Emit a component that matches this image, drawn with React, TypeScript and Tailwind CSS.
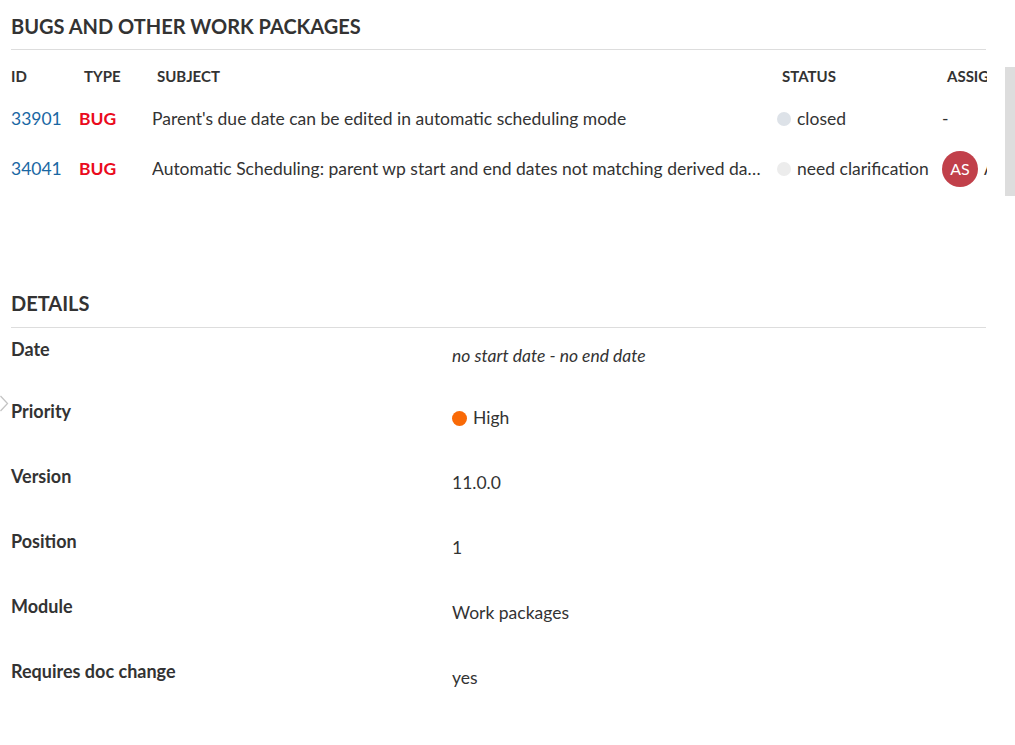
import React from 'react';

type WorkPackage = {
  id: string;
  type: string;
  subject: string;
  status: string;
  statusColor: string;
  assignee?: { initials: string; name: string };
};

const packages: WorkPackage[] = [
  {
    id: '33901',
    type: 'BUG',
    subject: "Parent's due date can be edited in automatic scheduling mode",
    status: 'closed',
    statusColor: 'bg-[#dde2e8]',
  },
  {
    id: '34041',
    type: 'BUG',
    subject:
      'Automatic Scheduling: parent wp start and end dates not matching derived dates of children',
    status: 'need clarification',
    statusColor: 'bg-[#ececec]',
    assignee: { initials: 'AS', name: 'Aleksandra Sokolova' },
  },
];

const details = [
  { label: 'Date', value: 'no start date - no end date', italic: true },
  { label: 'Priority', value: 'High', dot: true },
  { label: 'Version', value: '11.0.0' },
  { label: 'Position', value: '1' },
  { label: 'Module', value: 'Work packages' },
  { label: 'Requires doc change', value: 'yes' },
];

export default function App() {
  return (
    <div className="relative min-h-screen bg-white text-[#333] font-['Lato','Noto_Sans',sans-serif]">
      {/* scrollbar thumb */}
      <div className="absolute right-0 top-[67px] w-[10px] h-[129px] bg-[#dddddd]" />
      {/* collapsed panel toggle */}
      <svg
        className="absolute left-0 top-[395px]"
        width="9"
        height="17"
        viewBox="0 0 9 17"
        fill="none"
      >
        <path d="M0.5 1 L7.5 8.5 L0.5 16" stroke="#c4c4c4" strokeWidth="1.3" />
      </svg>

      <div className="pl-[11px] w-[987px]">
        <h2 className="pt-[14px] pb-[11px] text-[20px] leading-[24px] font-bold uppercase border-b border-[#dddddd] mr-[1px]">
          Bugs and other work packages
        </h2>

        <div className="overflow-hidden">
          <div className="flex h-[44px] items-end pb-[8px] text-[15px] leading-[20px] font-bold uppercase whitespace-nowrap">
            <div className="w-[68px] shrink-0">ID</div>
            <div className="w-[73px] shrink-0 pl-[5px]">Type</div>
            <div className="w-[625px] shrink-0 pl-[5px]">Subject</div>
            <div className="w-[165px] shrink-0 pl-[5px]">Status</div>
            <div className="shrink-0 pl-[5px]">Assignee</div>
          </div>
          {packages.map((wp) => (
            <div
              key={wp.id}
              className="flex h-[50px] items-center text-[17.5px] leading-[24px] whitespace-nowrap"
            >
              <div className="w-[68px] shrink-0 text-[#1a67a3]">{wp.id}</div>
              <div className="w-[73px] shrink-0 font-bold text-[#ea0b1c]">{wp.type}</div>
              <div className="w-[611px] mr-[14px] shrink-0 truncate">{wp.subject}</div>
              <div className="w-[165px] shrink-0 flex items-center gap-[6px]">
                <span className={`w-[14px] h-[14px] rounded-full ${wp.statusColor}`} />
                <span>{wp.status}</span>
              </div>
              <div className="shrink-0 flex items-center gap-[6px]">
                {wp.assignee ? (
                  <>
                    <span className="w-[36px] h-[36px] rounded-full bg-[#c1404a] text-white text-[16px] flex items-center justify-center">
                      {wp.assignee.initials}
                    </span>
                    <span>{wp.assignee.name}</span>
                  </>
                ) : (
                  <span>-</span>
                )}
              </div>
            </div>
          ))}
        </div>

        <h2 className="mt-[97px] pb-[12px] text-[20px] leading-[24px] font-bold uppercase border-b border-[#dddddd] mr-[1px]">
          Details
        </h2>

        <div>
          {details.map((d, i) => (
            <div
              key={d.label}
              className={`flex items-start leading-[24px] ${i === 0 ? 'h-[62px]' : 'h-[65px]'}`}
            >
              <div className="w-[441px] shrink-0 pt-[9px] text-[18px] font-bold">{d.label}</div>
              <div
                className={`pt-[16px] flex items-center gap-[6px] text-[17.5px] ${d.italic ? 'italic' : ''}`}
              >
                {d.dot && <span className="w-[15px] h-[15px] rounded-full bg-[#f96a07]" />}
                <span>{d.value}</span>
              </div>
            </div>
          ))}
        </div>
      </div>
    </div>
  );
}
